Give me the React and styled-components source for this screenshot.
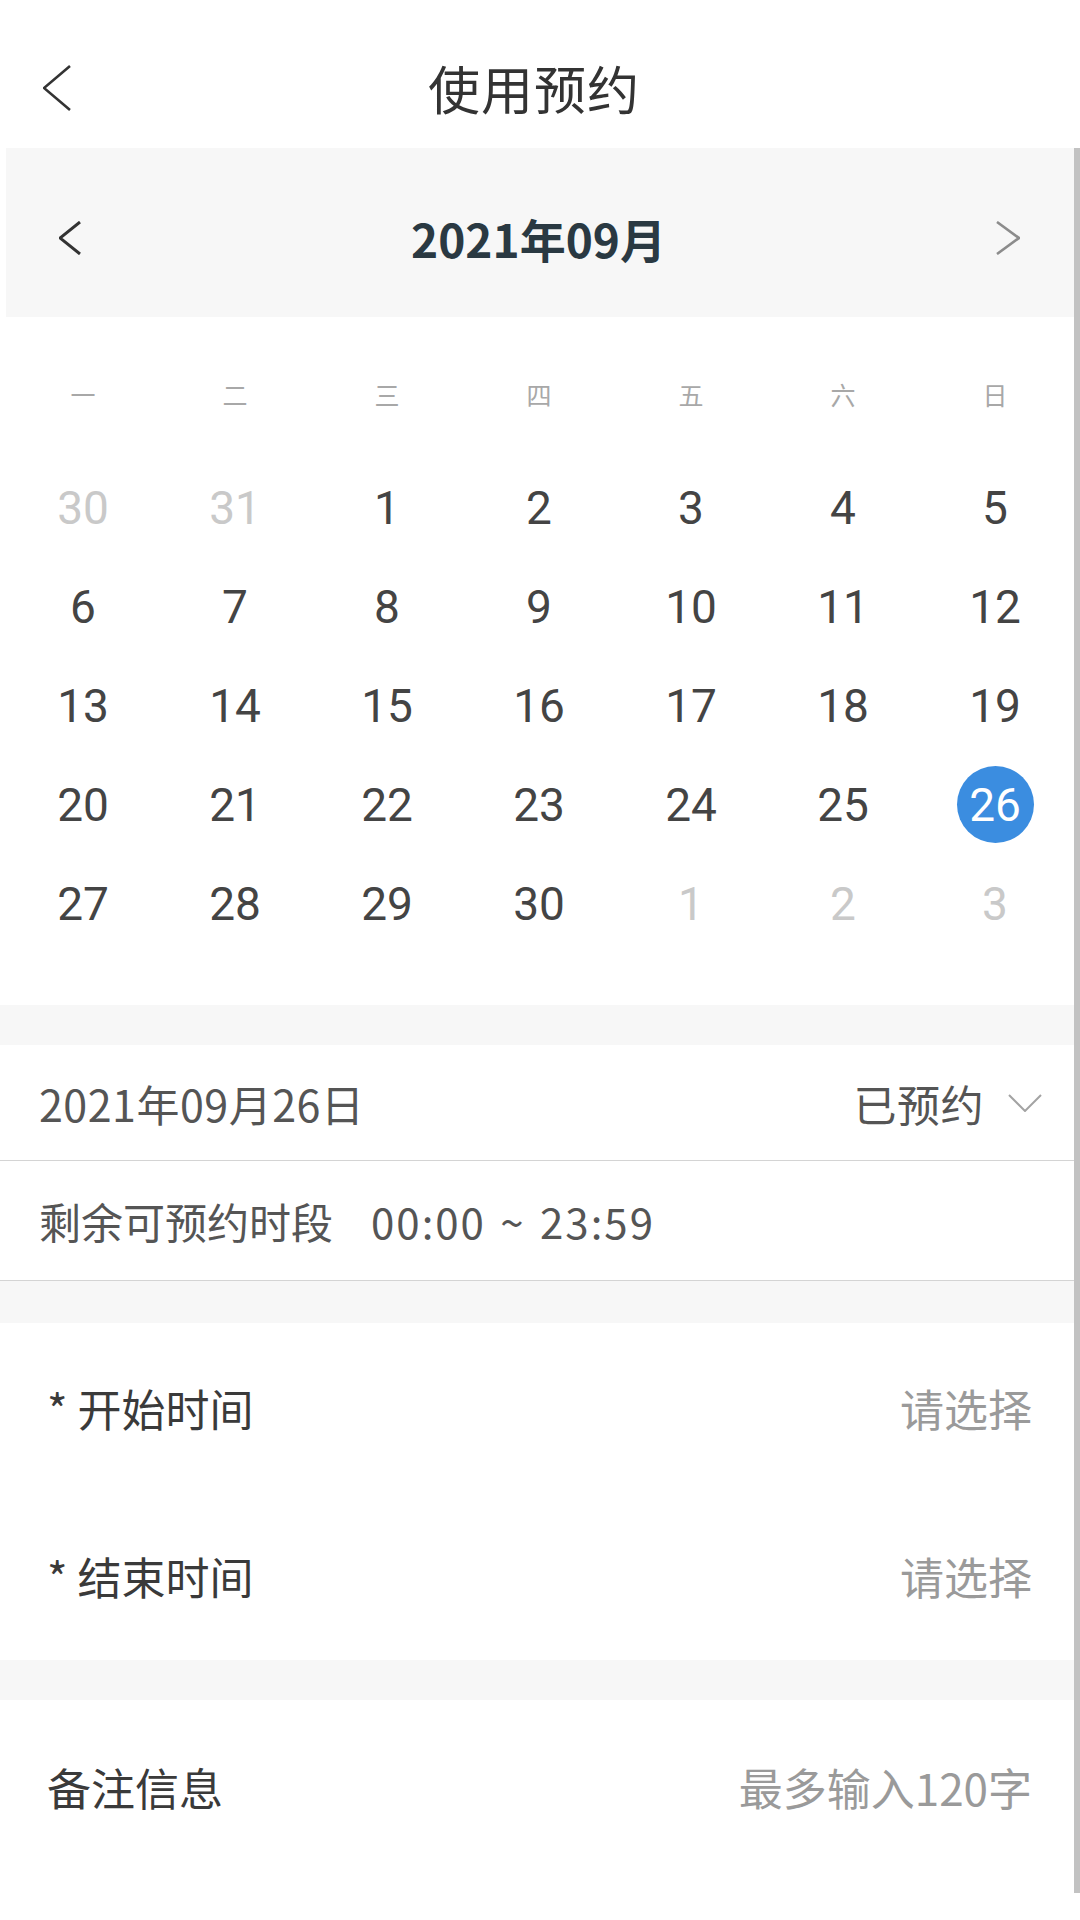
import React from "react"
import styled, { createGlobalStyle } from "styled-components"

const GlobalStyle = createGlobalStyle`
    html, body {
        margin: 0;
        padding: 0;
        background: #fff;
    }
    body {
        font-family: "Noto Sans CJK SC", "Noto Sans", sans-serif;
        color: #333;
    }
    * {
        box-sizing: border-box;
    }
`

const Page = styled.div`
    position: relative;
    width: 1080px;
    min-height: 1920px;
    background: #fff;
`

// Thin scrollbar thumb along the right edge
const ScrollThumb = styled.div`
    position: absolute;
    top: 148px;
    right: 0;
    width: 6px;
    height: 1745px;
    background: #c2c2c2;
`

const NavBar = styled.header`
    display: grid;
    grid-template-columns: 1fr auto 1fr;
    align-items: center;
    height: 148px;
    padding: 28px 12px 0 0;
`

const BackButton = styled.button`
    justify-self: start;
    display: flex;
    align-items: center;
    margin-left: 43px;
    padding: 0;
    border: 0;
    background: none;
`

const NavTitle = styled.h1`
    margin: 0;
    font-size: 52px;
    font-weight: 400;
    line-height: 1;
    color: #333;
    letter-spacing: 1px;
`

const MonthBar = styled.div`
    display: flex;
    align-items: center;
    justify-content: space-between;
    height: 169px;
    margin: 0 6px;
    padding: 10px 54px 0 53px;
    background: #f7f7f7;
`

const MonthLabel = styled.div`
    font-size: 46px;
    font-weight: 700;
    color: #2a3942;
    line-height: 1;
`

const ArrowButton = styled.button`
    display: flex;
    padding: 0;
    border: 0;
    background: none;
`

const DayGrid = styled.div`
    display: grid;
    grid-template-columns: repeat(7, 152px);
    padding: 0 9px 52px 7px;
`

const WeekDay = styled.div`
    display: flex;
    align-items: center;
    justify-content: center;
    height: 141px;
    padding-top: 12px;
    font-size: 25px;
    color: #a8a8a8;
`

const DayCell = styled.div`
    display: flex;
    align-items: center;
    justify-content: center;
    height: 99px;
`

const DayNum = styled.span`
    display: flex;
    align-items: center;
    justify-content: center;
    width: 77px;
    height: 77px;
    border-radius: 50%;
    font-family: "Roboto", "Noto Sans", sans-serif;
    font-size: 46px;
    line-height: 1;
    color: ${p => (p.$selected ? "#fff" : p.$muted ? "#c9c9c9" : "#444")};
    background: ${p => (p.$selected ? "#3b8de0" : "transparent")};
`

const Gap = styled.div`
    height: ${p => p.$h}px;
    background: #f7f7f7;
`

const InfoRow = styled.div`
    display: flex;
    align-items: center;
    justify-content: space-between;
    height: ${p => p.$h}px;
    padding: 0 38px 0 39px;
    border-bottom: 1px solid #d4d4d4;
    font-size: 43px;
    letter-spacing: 0.5px;
    color: #555;
`

const InfoLabel = styled.span`
    display: flex;
    align-items: center;
    gap: 38px;
    font-size: 42px;
    letter-spacing: 0;
`

const TimeRange = styled.span`
    letter-spacing: 2px;
    word-spacing: 3px;
`

const StatusPicker = styled.span`
    display: flex;
    align-items: center;
    gap: 24px;
    color: #555;
`

const FormRow = styled.div`
    display: flex;
    align-items: center;
    justify-content: space-between;
    height: ${p => p.$h}px;
    padding: 0 48px 0 47px;
    font-size: 44px;
`

const FieldLabel = styled.span`
    color: #3a3a3a;
`

const Placeholder = styled.span`
    color: #9a9a9a;
`

const Chevron = ({ dir, w, h, color, stroke }) => {
    const pts = {
        left: `${w - 1},1 1,${h / 2} ${w - 1},${h - 1}`,
        right: `1,1 ${w - 1},${h / 2} 1,${h - 1}`,
        down: `1,1 ${w / 2},${h - 1} ${w - 1},1`,
    }[dir]
    return (
        <svg width={w} height={h} viewBox={`0 0 ${w} ${h}`} fill="none">
            <polyline points={pts} stroke={color} strokeWidth={stroke} strokeLinejoin="miter" />
        </svg>
    )
}

const weekDays = ["一", "二", "三", "四", "五", "六", "日"]

const days = [
    ...[30, 31].map(n => ({ n, muted: true })),
    ...Array.from({ length: 30 }, (_, i) => ({ n: i + 1 })),
    ...[1, 2, 3].map(n => ({ n, muted: true })),
]

const App = () => (
    <>
        <GlobalStyle />
        <Page>
            <NavBar>
                <BackButton>
                    <Chevron dir="left" w={28} h={46} color="#333" stroke={2.6} />
                </BackButton>
                <NavTitle>使用预约</NavTitle>
                <span />
            </NavBar>

            <MonthBar>
                <ArrowButton>
                    <Chevron dir="left" w={22} h={34} color="#333" stroke={3} />
                </ArrowButton>
                <MonthLabel>2021年09月</MonthLabel>
                <ArrowButton>
                    <Chevron dir="right" w={24} h={34} color="#8c8c8c" stroke={2.6} />
                </ArrowButton>
            </MonthBar>

            <DayGrid>
                {weekDays.map(d => (
                    <WeekDay key={d}>{d}</WeekDay>
                ))}
                {days.map((d, i) => (
                    <DayCell key={i}>
                        <DayNum $muted={d.muted} $selected={!d.muted && d.n === 26}>
                            {d.n}
                        </DayNum>
                    </DayCell>
                ))}
            </DayGrid>

            <Gap $h={40} />

            <InfoRow $h={116}>
                <span>2021年09月26日</span>
                <StatusPicker>
                    已预约
                    <Chevron dir="down" w={34} h={18} color="#a3a3a3" stroke={2} />
                </StatusPicker>
            </InfoRow>
            <InfoRow $h={120}>
                <InfoLabel>
                    <span>剩余可预约时段</span>
                    <TimeRange>00:00 ~ 23:59</TimeRange>
                </InfoLabel>
            </InfoRow>

            <Gap $h={42} />

            <FormRow $h={169}>
                <FieldLabel>* 开始时间</FieldLabel>
                <Placeholder>请选择</Placeholder>
            </FormRow>
            <FormRow $h={168}>
                <FieldLabel>* 结束时间</FieldLabel>
                <Placeholder>请选择</Placeholder>
            </FormRow>

            <Gap $h={40} />

            <FormRow $h={174}>
                <FieldLabel>备注信息</FieldLabel>
                <Placeholder>最多输入120字</Placeholder>
            </FormRow>

            <ScrollThumb />
        </Page>
    </>
)

export default App
